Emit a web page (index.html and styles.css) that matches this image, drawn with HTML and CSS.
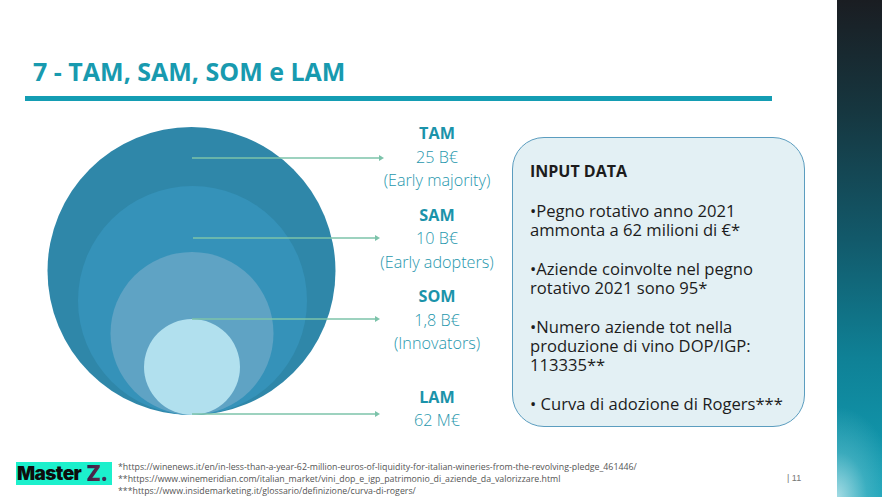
FILE: index.html
```html
<!DOCTYPE html>
<html lang="it">
<head>
<meta charset="utf-8">
<title>7 - TAM, SAM, SOM e LAM</title>
<link rel="stylesheet" href="styles.css">
</head>
<body>
<div class="slide">
  <div class="main">
    <header class="head">
      <h1 class="title">7 - TAM, SAM, SOM e LAM</h1>
      <div class="rule"></div>
    </header>
    <section class="content">
      <div class="diagram">
        <svg class="circles" width="500" height="340" viewBox="0 0 500 340" aria-hidden="true">
          <circle cx="191.5" cy="161" r="144" fill="#2f87a9"/>
          <circle cx="192.5" cy="190.5" r="114.5" fill="#3592b9"/>
          <circle cx="192" cy="223.5" r="81.5" fill="#5fa3c4"/>
          <circle cx="192" cy="257" r="48" fill="#b1e0ee"/>
          <g stroke="#7cc3aa" stroke-width="1.5" fill="#7cc3aa">
            <line x1="192" y1="48" x2="379" y2="48"/>
            <polygon points="379,45 384,48 379,51" stroke="none"/>
            <line x1="193" y1="128" x2="375" y2="128"/>
            <polygon points="375,125 380,128 375,131" stroke="none"/>
            <line x1="192" y1="209" x2="375" y2="209"/>
            <polygon points="375,206 380,209 375,212" stroke="none"/>
            <line x1="192" y1="304" x2="375" y2="304"/>
            <polygon points="375,301 380,304 375,307" stroke="none"/>
          </g>
        </svg>
        <div class="labels">
          <div class="group g-tam"><b>TAM</b><span>25 B€</span><span>(Early majority)</span></div>
          <div class="group g-sam"><b>SAM</b><span>10 B€</span><span>(Early adopters)</span></div>
          <div class="group g-som"><b>SOM</b><span>1,8 B€</span><span>(Innovators)</span></div>
          <div class="group g-lam"><b>LAM</b><span>62 M€</span></div>
        </div>
      </div>
      <div class="inputbox">
        <p class="ib-title">INPUT DATA</p>
        <p>•Pegno rotativo anno 2021 ammonta a 62 milioni di €*</p>
        <p>•Aziende coinvolte nel pegno rotativo 2021 sono 95*</p>
        <p>•Numero aziende tot nella produzione di vino DOP/IGP: 113335**</p>
        <p>• Curva di adozione di Rogers***</p>
      </div>
    </section>
    <footer class="foot">
      <div class="logo"><span class="logo-m">Master</span><span class="logo-z">Z.</span></div>
      <div class="notes">
        <div>*https://winenews.it/en/in-less-than-a-year-62-million-euros-of-liquidity-for-italian-wineries-from-the-revolving-pledge_461446/</div>
        <div>**https://www.winemeridian.com/italian_market/vini_dop_e_igp_patrimonio_di_aziende_da_valorizzare.html</div>
        <div>***https://www.insidemarketing.it/glossario/definizione/curva-di-rogers/</div>
      </div>
      <div class="pagenum">| 11</div>
    </footer>
  </div>
  <aside class="side"></aside>
</div>
</body>
</html>
```
FILE: styles.css
```css
html, body {
  margin: 0;
  padding: 0;
  background: #ffffff;
}
body {
  width: 882px;
  height: 497px;
  overflow: hidden;
  font-family: "Open Sans", "Noto Sans", "Liberation Sans", sans-serif;
}
.slide {
  display: flex;
  width: 882px;
  height: 497px;
}
.main {
  width: 837px;
  display: flex;
  flex-direction: column;
}
.side {
  width: 45px;
  background:
    radial-gradient(ellipse 60px 90px at 0% 100%, rgba(190,230,236,0.85), rgba(120,200,212,0.4) 50%, rgba(19,160,181,0) 100%),
    linear-gradient(to bottom, #1a1d22 0%, #16363f 22%, #12596a 48%, #0f8196 72%, #12a0b6 100%);
}
.head {
  height: 110px;
  padding-top: 56px;
  box-sizing: border-box;
}
.title {
  margin: 0;
  padding-left: 33px;
  font-size: 25px;
  line-height: 30px;
  font-weight: 700;
  color: #189aaf;
}
.rule {
  margin: 10px 0 0 25px;
  width: 747px;
  height: 5px;
  background: #149db3;
}
.content {
  height: 340px;
  display: flex;
}
.diagram {
  width: 512px;
  display: grid;
}
.circles {
  grid-area: 1 / 1;
  display: block;
}
.labels {
  grid-area: 1 / 1;
  margin-left: 377px;
  width: 120px;
  padding-top: 12px;
  display: flex;
  flex-direction: column;
  text-align: center;
  color: #1f97ad;
  font-size: 16.2px;
  line-height: 23.5px;
  font-weight: 300;
}
.group {
  display: flex;
  flex-direction: column;
}
.group b {
  font-weight: 700;
  color: #1b93aa;
}
.g-sam { margin-top: 11px; }
.g-som { margin-top: 11px; }
.g-lam { margin-top: 30px; }
.inputbox {
  margin-top: 27px;
  width: 293px;
  height: 290px;
  box-sizing: border-box;
  border: 1.3px solid #5b9dbf;
  border-radius: 32px;
  background: #e3f0f4;
  padding: 24px 8px 0 17px;
  color: #1c1c1c;
  font-size: 16.6px;
  line-height: 19px;
}
.inputbox p {
  margin: 20px 0 0 0;
}
.inputbox .ib-title {
  margin-top: 0;
  font-weight: 700;
  font-size: 16px;
}
.foot {
  height: 47px;
  display: flex;
  align-items: flex-start;
}
.logo {
  margin: 12px 0 0 16px;
  width: 96px;
  height: 23px;
  background: #1cf0cc;
  display: flex;
  align-items: center;
  font-family: "Inter", "Liberation Sans", sans-serif;
  font-weight: 900;
  font-size: 19px;
  letter-spacing: -0.6px;
  padding-left: 1px;
  box-sizing: border-box;
  overflow: hidden;
}
.logo-m {
  color: #0d0d0d;
}
.logo-z {
  margin-left: 5px;
  font-size: 21px;
  color: #3a2446;
  background: linear-gradient(100deg, #2c1f4a 0%, #5a2a4a 60%, #2a2f5a 100%);
  -webkit-background-clip: text;
  background-clip: text;
  -webkit-text-fill-color: transparent;
}
.notes {
  margin: 11px 0 0 6px;
  font-size: 8.8px;
  line-height: 12px;
  color: #555555;
  font-weight: 400;
  white-space: nowrap;
  width: 640px;
}
.pagenum {
  margin: 22px 0 0 29px;
  font-size: 9px;
  line-height: 12px;
  color: #777777;
  font-family: "Liberation Sans", sans-serif;
}
```
